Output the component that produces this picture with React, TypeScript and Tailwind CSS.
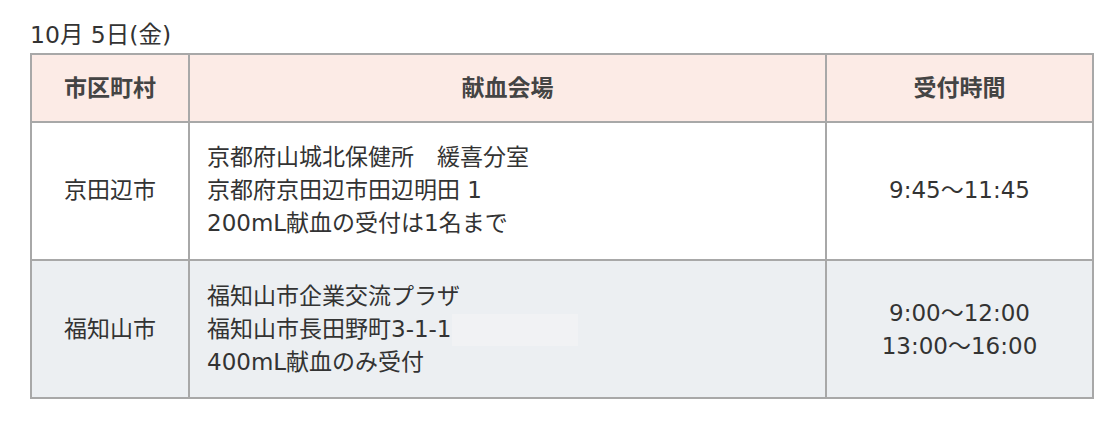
import React from "react";

const font = { fontFamily: '"DejaVu Sans", "Noto Sans CJK JP", sans-serif' };

export default function App() {
  return (
    <div className="bg-white w-[1120px] h-[425px] pt-[19px] pl-[30px] text-[#333333]" style={font}>
      <div className="text-[23.5px] leading-[33px] mb-[1px]">10月 5日(金)</div>
      <table className="border-collapse w-[1062px] text-[23px] leading-[33px] table-fixed">
        <colgroup>
          <col className="w-[158px]" />
          <col className="w-[637px]" />
          <col className="w-[267px]" />
        </colgroup>
        <thead>
          <tr className="bg-[#fcebe6]">
            <th className="border-2 border-[#a8a8a8] pt-[17px] pb-[16px] font-bold text-[#444444] text-center">市区町村</th>
            <th className="border-2 border-[#a8a8a8] pt-[17px] pb-[16px] font-bold text-[#444444] text-center">献血会場</th>
            <th className="border-2 border-[#a8a8a8] pt-[17px] pb-[16px] font-bold text-[#444444] text-center">受付時間</th>
          </tr>
        </thead>
        <tbody>
          <tr className="bg-white">
            <td className="border-2 border-[#a8a8a8] text-center pt-[18px] pb-[19px]">京田辺市</td>
            <td className="border-2 border-[#a8a8a8] pt-[18px] pb-[19px] pl-[17px]">
              <div>京都府山城北保健所　緩喜分室</div>
              <div>京都府京田辺市田辺明田 1</div>
              <div>200mL献血の受付は1名まで</div>
            </td>
            <td className="border-2 border-[#a8a8a8] text-center pt-[18px] pb-[19px]">9:45～11:45</td>
          </tr>
          <tr className="bg-[#eceff2]">
            <td className="border-2 border-[#a8a8a8] text-center pt-[19px] pb-[18px]">福知山市</td>
            <td className="border-2 border-[#a8a8a8] pt-[19px] pb-[18px] pl-[17px]">
              <div>福知山市企業交流プラザ</div>
              <div className="flex items-center">
                <span>福知山市長田野町3-1-1</span>
                <span className="inline-block w-[126px] h-[32px] bg-[#f1f2f4]" />
              </div>
              <div>400mL献血のみ受付</div>
            </td>
            <td className="border-2 border-[#a8a8a8] text-center pt-[19px] pb-[18px]">
              <div>9:00～12:00</div>
              <div>13:00～16:00</div>
            </td>
          </tr>
        </tbody>
      </table>
    </div>
  );
}
